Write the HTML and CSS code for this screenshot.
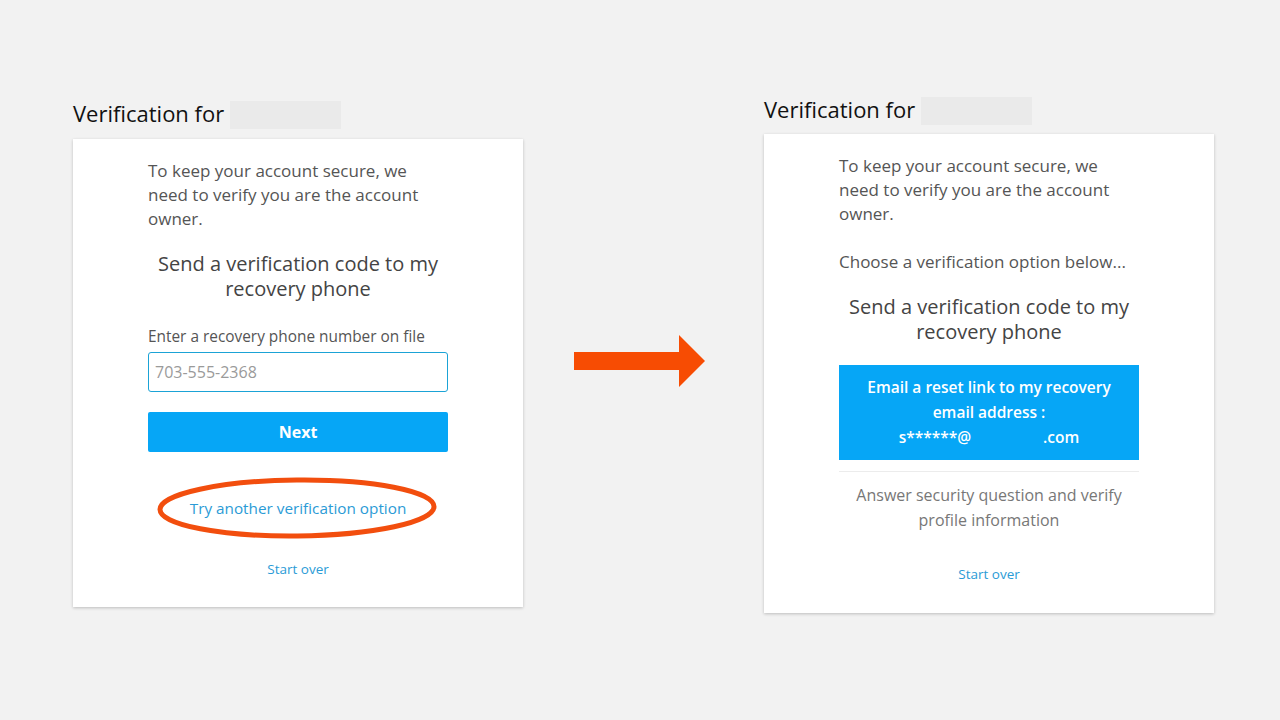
FILE: index.html
```html
<!DOCTYPE html>
<html lang="en">
<head>
<meta charset="utf-8">
<title>Verification</title>
<link rel="stylesheet" href="styles.css">
</head>
<body>
<div class="stage">
  <section class="panel panel-left">
    <div class="title-row">
      <h1 class="title">Verification for</h1>
      <span class="redacted"></span>
    </div>
    <div class="card">
      <p class="intro">To keep your account secure, we need to verify you are the account owner.</p>
      <h2 class="option-heading">Send a verification code to my recovery phone</h2>
      <label class="field-label">Enter a recovery phone number on file</label>
      <div class="input">703-555-2368</div>
      <div class="btn-primary">Next</div>
      <div class="try-wrap">
        <a class="link try-link">Try another verification option</a>
        <svg class="circle-mark" viewBox="0 0 290 70" width="290" height="70" aria-hidden="true">
          <ellipse cx="145" cy="34" rx="137" ry="28" fill="none" stroke="#f24e0e" stroke-width="5" transform="rotate(-0.6 145 34)"/>
        </svg>
      </div>
      <a class="link small-link start-left">Start over</a>
    </div>
  </section>

  <svg class="arrow" viewBox="0 0 132 54" width="132" height="54" aria-hidden="true">
    <polygon points="0,18 105,18 105,1 131,27 105,53 105,36 0,36" fill="#f74c03"/>
  </svg>

  <section class="panel panel-right">
    <div class="title-row">
      <h1 class="title">Verification for</h1>
      <span class="redacted"></span>
    </div>
    <div class="card card-right">
      <p class="intro">To keep your account secure, we need to verify you are the account owner.</p>
      <p class="choose">Choose a verification option below...</p>
      <h2 class="option-heading">Send a verification code to my recovery phone</h2>
      <div class="option-active">Email a reset link to my recovery email address :<br>s******@<span class="gap"></span>.com</div>
      <div class="divider"></div>
      <div class="option-muted">Answer security question and verify profile information</div>
      <a class="link small-link start-right">Start over</a>
    </div>
  </section>
</div>
</body>
</html>
```

FILE: styles.css
```css
* { box-sizing: border-box; }

html, body {
  margin: 0;
  padding: 0;
  background: #f2f2f2;
  font-family: "Open Sans", "Noto Sans", sans-serif;
}

.stage {
  display: flex;
  align-items: flex-start;
  padding-left: 73px;
  width: 1280px;
  height: 720px;
}

.panel {
  width: 450px;
  display: flex;
  flex-direction: column;
}

.panel-left { margin-top: 101px; }
.panel-right { margin-top: 97px; margin-left: 58px; }

.title-row {
  display: flex;
  align-items: center;
  height: 28px;
}

.title {
  margin: -4px 0 0;
  font-size: 22px;
  font-weight: 400;
  line-height: 28px;
  color: #111;
}

.redacted {
  display: inline-block;
  width: 111px;
  height: 28px;
  margin-left: 6px;
  background: #eaeaea;
}

.card {
  margin-top: 10px;
  background: #fff;
  box-shadow: 0 1px 3px rgba(0, 0, 0, 0.22);
  padding: 20px 75px 28px;
  display: flex;
  flex-direction: column;
  align-items: stretch;
}

.card-right {
  margin-top: 9px;
  padding-bottom: 29px;
}

.intro {
  margin: 0;
  font-size: 17px;
  line-height: 24px;
  color: #555;
}

.choose {
  margin: 24px 0 0;
  font-size: 17px;
  line-height: 24px;
  color: #555;
}

.option-heading {
  margin: 20px 0 0;
  font-size: 20px;
  line-height: 25px;
  font-weight: 400;
  text-align: center;
  color: #444;
}

.field-label {
  display: block;
  margin-top: 24px;
  font-size: 15.4px;
  line-height: 24px;
  color: #555;
}

.input {
  margin-top: 3px;
  height: 40px;
  border: 1px solid #1ba3d6;
  border-radius: 3px;
  padding: 0 6px;
  font-size: 16px;
  line-height: 38px;
  color: #9a9a9a;
}

.btn-primary {
  margin-top: 20px;
  height: 40px;
  background: #06a6f6;
  border-radius: 2px;
  color: #fff;
  font-size: 16px;
  font-weight: 700;
  line-height: 40px;
  text-align: center;
}

.link {
  color: #2b9bd6;
  text-align: center;
  text-decoration: none;
}

.try-wrap {
  position: relative;
  margin-top: 44px;
  text-align: center;
}

.try-link {
  display: block;
  font-size: 15.3px;
  line-height: 24px;
}

.circle-mark {
  position: absolute;
  left: 4px;
  top: -22px;
}

.small-link {
  display: block;
  font-size: 13.5px;
  line-height: 20px;
}

.start-left { margin-top: 39px; }
.start-right { margin-top: 31px; }

.arrow {
  flex: none;
  margin-left: 51px;
  margin-top: 334px;
}

.option-active {
  margin-top: 21px;
  height: 95px;
  padding: 10px 24px 0;
  background: #06a6f6;
  color: #fff;
  font-size: 15.5px;
  font-weight: 600;
  line-height: 25px;
  text-align: center;
}

.gap {
  display: inline-block;
  width: 72px;
}

.divider {
  margin-top: 11px;
  height: 1px;
  background: #ececec;
}

.option-muted {
  margin-top: 11px;
  font-size: 16px;
  line-height: 25px;
  color: #777;
  text-align: center;
}
```
